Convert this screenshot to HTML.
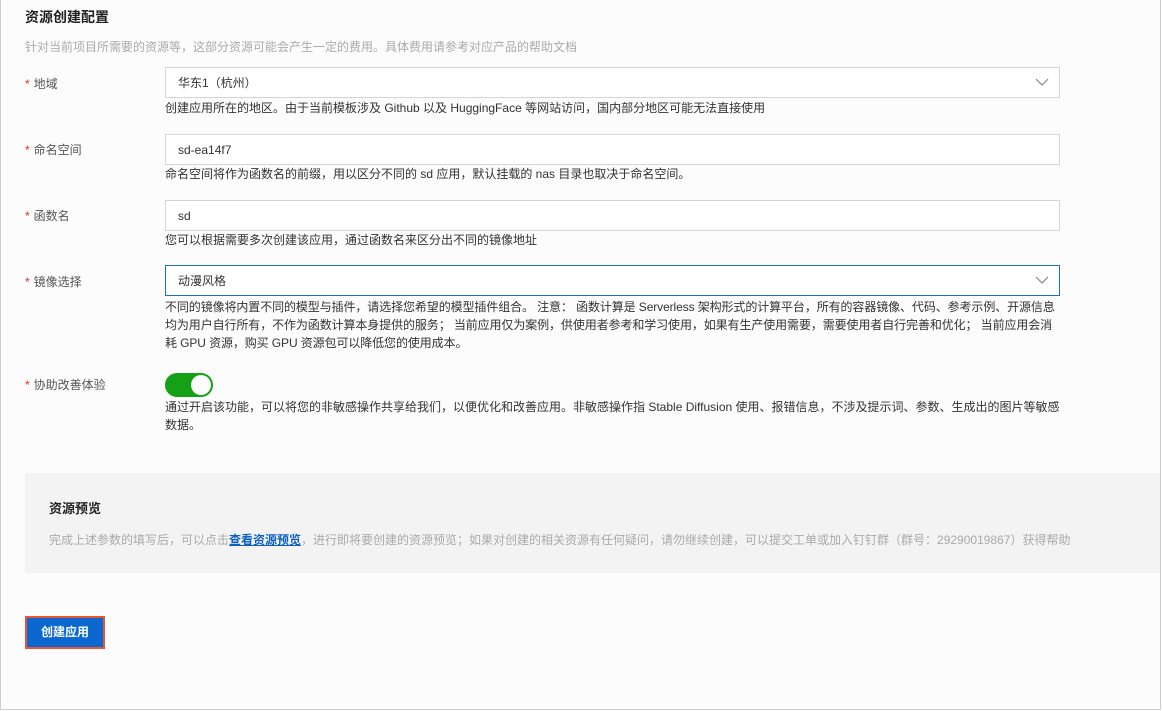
<!DOCTYPE html>
<html><head><meta charset="utf-8"><style>
*{margin:0;padding:0;box-sizing:border-box}
body{width:1162px;height:711px;background:#fcfcfc;font-family:"Liberation Sans","Noto Sans CJK SC",sans-serif;font-size:12px;color:#333;position:relative;overflow:hidden}
.frame{position:absolute;left:0;top:-2px;width:1161px;height:712px;border:1px solid #cfcfcf}
.a{position:absolute;white-space:nowrap}
.lbl{left:25px;color:#555}
.lbl b{color:#e0301e;font-weight:normal;margin-right:4px}
.inp{position:absolute;left:165px;width:895px;height:31px;border:1px solid #d5d5d5;background:#fff;padding-left:12px;line-height:30px;color:#333}
.help{left:165px;color:#333;line-height:18px}
.chev{position:absolute;right:10px;top:8px}
</style></head><body>
<div class="frame"></div>
<div class="a" style="left:25px;top:7px;font-size:14px;font-weight:bold;color:#222">资源创建配置</div>
<div class="a" style="left:25px;top:38px;color:#aaa">针对当前项目所需要的资源等，这部分资源可能会产生一定的费用。具体费用请参考对应产品的帮助文档</div>

<div class="a lbl" style="top:75px"><b>*</b>地域</div>
<div class="inp" style="top:67px">华东1（杭州）<svg class="chev" width="14" height="12" viewBox="0 0 14 12"><path d="M1 3l6 6 6-6" fill="none" stroke="#888" stroke-width="1.2"/></svg></div>
<div class="a help" style="top:99px">创建应用所在的地区。由于当前模板涉及 Github 以及 HuggingFace 等网站访问，国内部分地区可能无法直接使用</div>

<div class="a lbl" style="top:141px"><b>*</b>命名空间</div>
<div class="inp" style="top:134px">sd-ea14f7</div>
<div class="a help" style="top:165px">命名空间将作为函数名的前缀，用以区分不同的 sd 应用，默认挂载的 nas 目录也取决于命名空间。</div>

<div class="a lbl" style="top:207px"><b>*</b>函数名</div>
<div class="inp" style="top:200px">sd</div>
<div class="a help" style="top:231px">您可以根据需要多次创建该应用，通过函数名来区分出不同的镜像地址</div>

<div class="a lbl" style="top:273px"><b>*</b>镜像选择</div>
<div class="inp" style="top:265px;border-color:#1a6fc9">动漫风格<svg class="chev" width="14" height="12" viewBox="0 0 14 12"><path d="M1 3l6 6 6-6" fill="none" stroke="#888" stroke-width="1.2"/></svg></div>
<div class="a help" style="top:298px;white-space:normal;width:910px;letter-spacing:-0.1px">不同的镜像将内置不同的模型与插件，请选择您希望的模型插件组合。 注意： 函数计算是 Serverless 架构形式的计算平台，所有的容器镜像、代码、参考示例、开源信息<br>均为用户自行所有，不作为函数计算本身提供的服务； 当前应用仅为案例，供使用者参考和学习使用，如果有生产使用需要，需要使用者自行完善和优化； 当前应用会消<br>耗 GPU 资源，购买 GPU 资源包可以降低您的使用成本。</div>

<div class="a lbl" style="top:376px"><b>*</b>协助改善体验</div>
<div class="a" style="left:165px;top:373px;width:48px;height:24px;border-radius:12px;background:#15a015"><div style="position:absolute;right:2px;top:2px;width:20px;height:20px;border-radius:50%;background:#fff"></div></div>
<div class="a help" style="top:398px;white-space:normal;width:910px">通过开启该功能，可以将您的非敏感操作共享给我们，以便优化和改善应用。非敏感操作指 Stable Diffusion 使用、报错信息，不涉及提示词、参数、生成出的图片等敏感<br>数据。</div>

<div class="a" style="left:25px;top:473px;width:1135px;height:100px;background:#f3f3f3"></div>
<div class="a" style="left:49px;top:498px;font-size:13px;font-weight:bold;color:#222">资源预览</div>
<div class="a" style="left:49px;top:531px;color:#aaa">完成上述参数的填写后，可以点击<span style="color:#0b5fc4;font-weight:bold;text-decoration:underline">查看资源预览</span>，进行即将要创建的资源预览；如果对创建的相关资源有任何疑问，请勿继续创建，可以提交工单或加入钉钉群（群号：29290019867）获得帮助</div>

<div class="a" style="left:25px;top:616px;width:80px;height:33px;background:#0b68d0;border:2px solid #e8552f;color:#fff;font-weight:bold;text-align:center;line-height:29px">创建应用</div>
</body></html>
